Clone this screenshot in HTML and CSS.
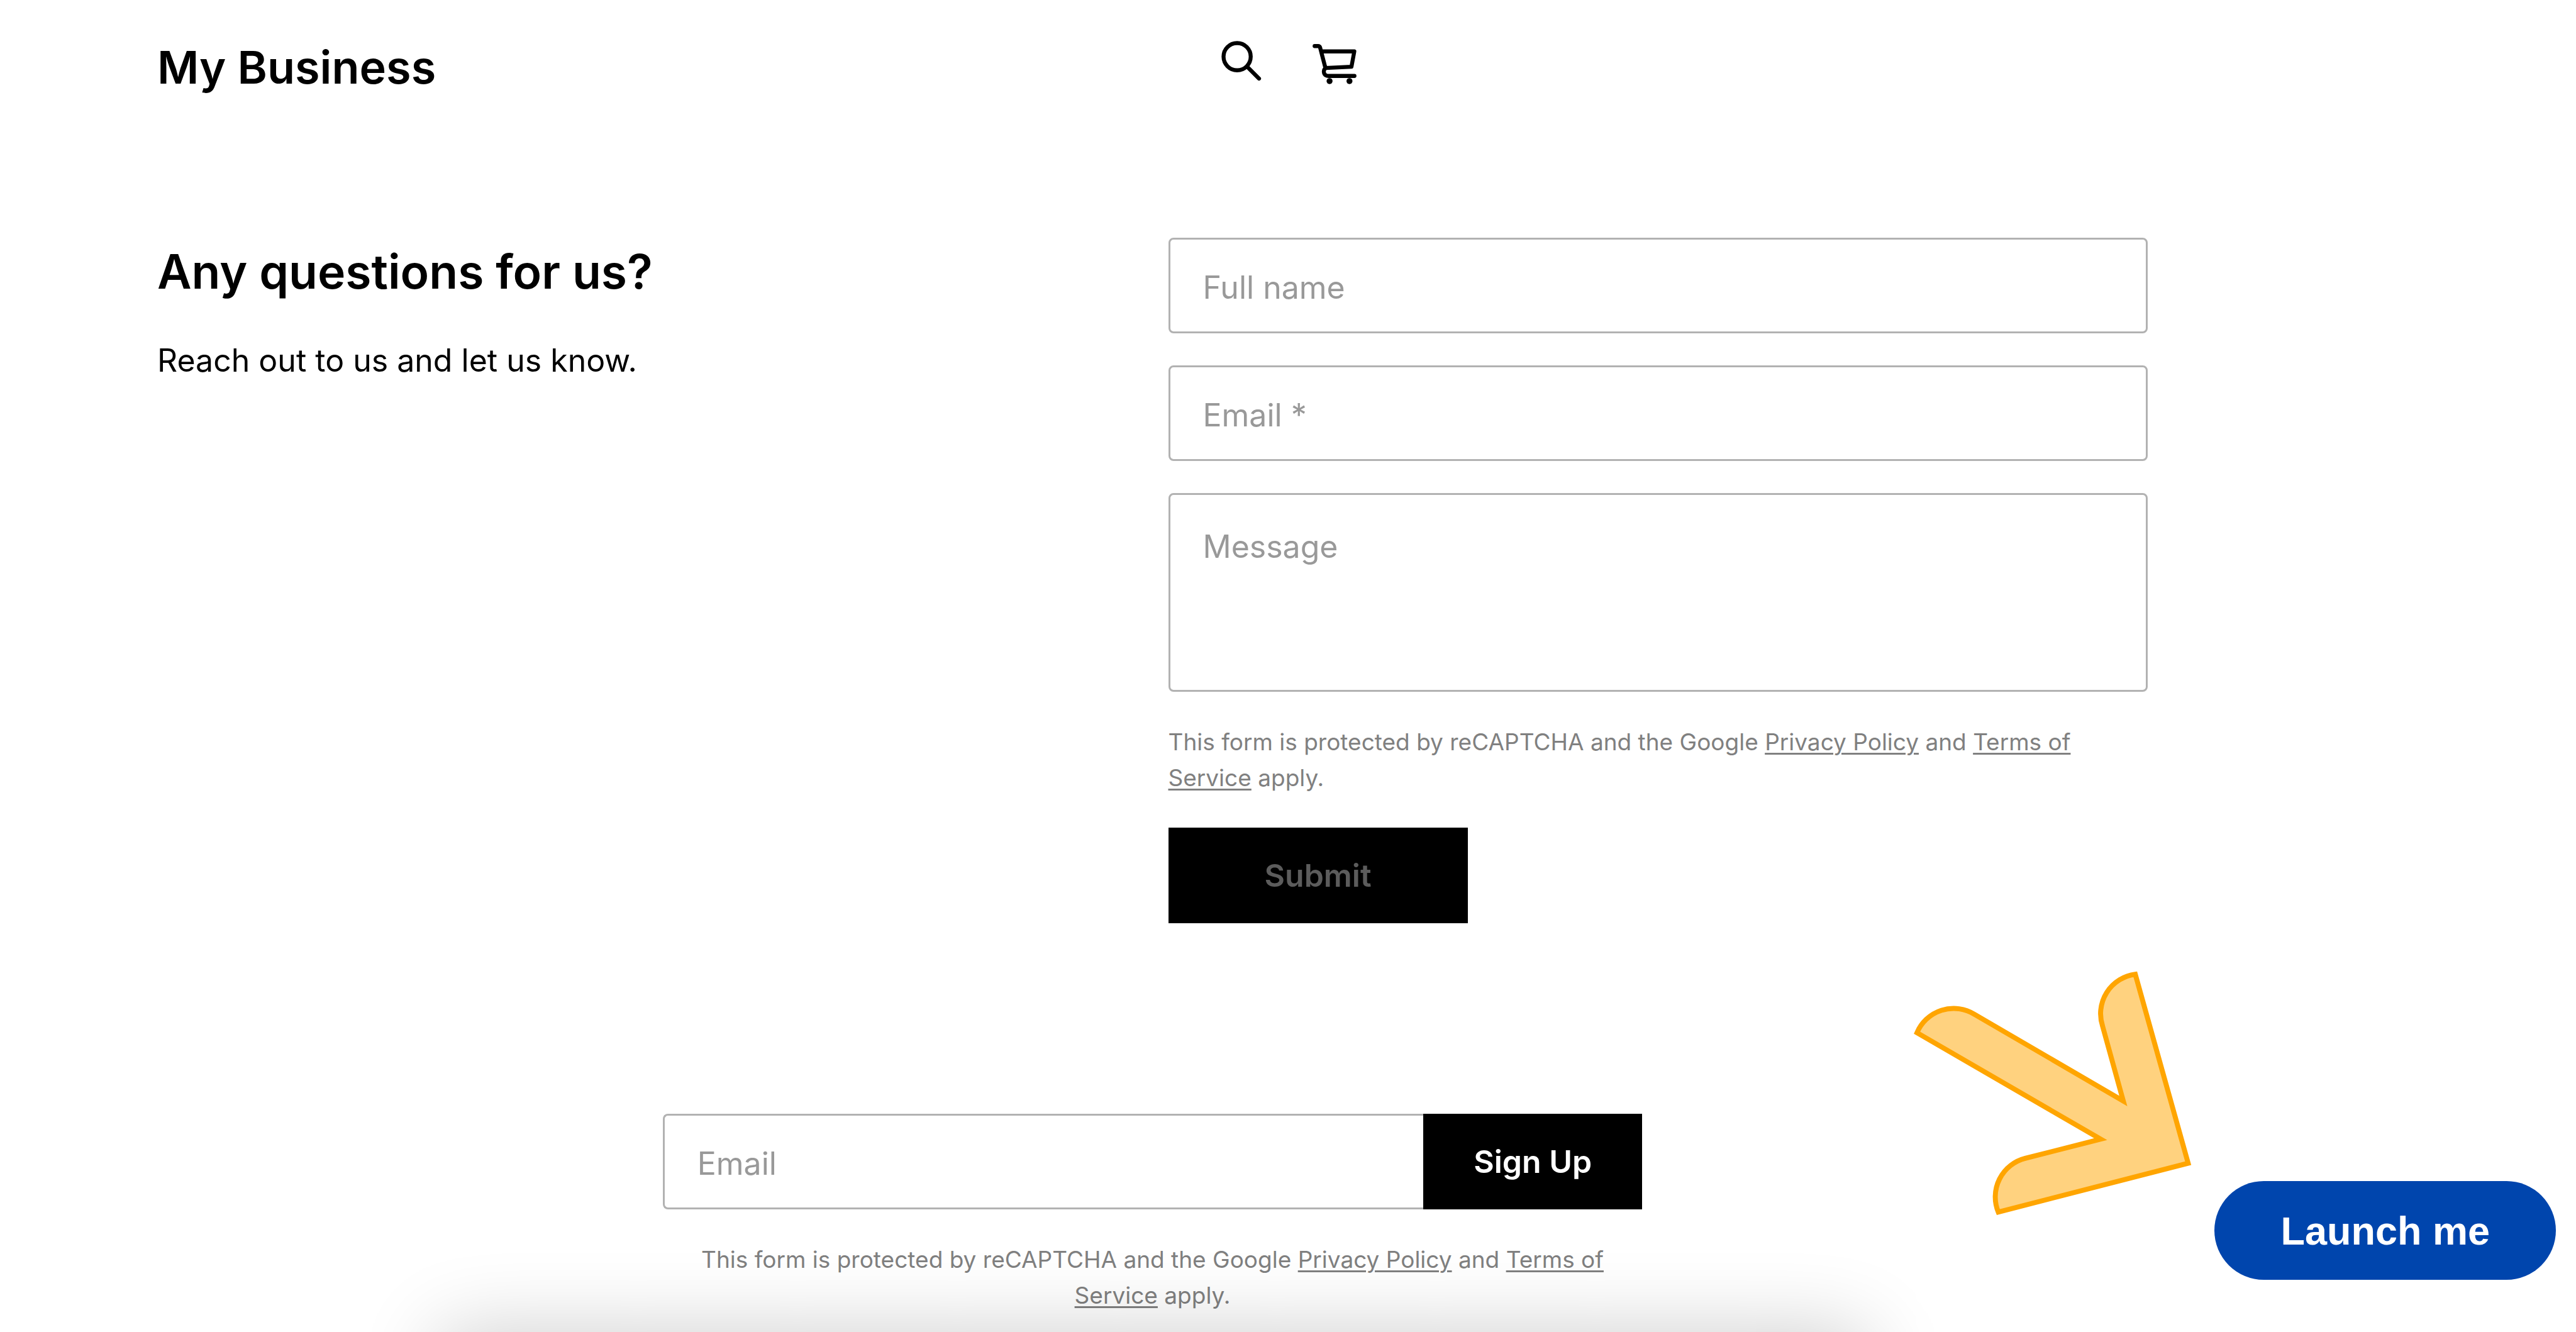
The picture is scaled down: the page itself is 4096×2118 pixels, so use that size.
FILE: index.html
```html
<!DOCTYPE html>
<html lang="en">
<head>
<meta charset="UTF-8">
<meta name="viewport" content="width=device-width, initial-scale=1.0">
<title>My Business</title>
<link rel="stylesheet" href="styles.css">
</head>
<body>
  <header class="header">
    <a href="index.html" class="logo">My Business</a>
    <div class="header-icons">
      <button type="button" class="icon-btn" aria-label="Search">
        <svg viewBox="0 0 96 96" fill="none" stroke="#000" stroke-width="8" stroke-linecap="round">
          <circle cx="39.3" cy="39.3" r="27.3"/>
          <path d="M60 60L83.3 83.3"/>
        </svg>
      </button>
      <button type="button" class="icon-btn" aria-label="Cart">
        <svg viewBox="0 0 96 96" fill="none" stroke="#000" stroke-width="8" stroke-linecap="round" stroke-linejoin="round">
          <path d="M8 18H15Q18 18 19 21L29.7 62L82 59.5L87.7 28.7H22"/>
          <path d="M29.7 62C24 68 26 78 36 78H88"/>
          <circle cx="38" cy="88.3" r="6" fill="#000" stroke="none"/>
          <circle cx="78" cy="88.3" r="6" fill="#000" stroke="none"/>
        </svg>
      </button>
    </div>
  </header>

  <main class="content">
    <section class="contact">
      <div class="contact-text">
        <h2>Any questions for us?</h2>
        <p>Reach out to us and let us know.</p>
      </div>
      <form class="contact-form">
        <input type="text" id="name" name="name" class="field" placeholder="Full name" aria-label="Full name">
        <input type="email" id="email" name="email" class="field" placeholder="Email *" aria-label="Email" required>
        <textarea id="message" name="message" class="field field-message" placeholder="Message" aria-label="Message"></textarea>

        <p class="note">This form is protected by reCAPTCHA and the Google <a href="#">Privacy Policy</a> and <a href="#">Terms of Service</a> apply.</p>

        <button type="submit" class="btn submit-btn" disabled>Submit</button>
      </form>
    </section>

    <form class="signup">
      <div class="signup-row">
        <input type="email" id="signup-email" name="signup-email" class="field signup-field" placeholder="Email" aria-label="Email">
        <button type="submit" class="btn signup-btn">Sign Up</button>
      </div>
      <p class="note">This form is protected by reCAPTCHA and the Google <a href="#">Privacy Policy</a> and <a href="#">Terms of Service</a> apply.</p>
    </form>
  </main>

  
  <div class="bottom-bar"></div>

  <!-- arrow pointing at the launcher -->
  <svg class="arrow" viewBox="0 0 700 560" fill="#ffa500" fill-opacity="0.5" stroke="#ffa500" stroke-width="10">
    <path d="M51.8 155.7A80 80 0 0 1 167.4 118.6L466.5 292.9L425 142.9A80 80 0 0 1 490.6 38.2L596.9 417.9L215.2 516.1A80 80 0 0 1 269.2 408.2L421 369.6Z"/>
  </svg>
  <button type="button" class="launcher">Launch me</button>
</body>
</html>
```

FILE: styles.css
```css
* {
  box-sizing: border-box;
}
body {
  font-family: Inter, "Liberation Sans", sans-serif;
  font-size: 50px;
  color: #000;
  background-color: #fff;
  margin: 0;
}
h2, p {
  margin: 0;
}

/* Header */
.header {
  display: grid;
  grid-template-columns: 1fr auto 1fr;
  align-items: start;
  padding: 59px 250px 0;
}
.logo {
  font-size: 72px;
  line-height: 96px;
  font-weight: 600;
  color: #000;
  text-decoration: none;
}
.header-icons {
  display: flex;
  gap: 72px;
}
.icon-btn {
  width: 76px;
  height: 76px;
  padding: 0;
  border: none;
  background: none;
  cursor: pointer;
}
.icon-btn svg {
  display: block;
  width: 100%;
}

/* Contact form */
.content {
  max-width: 3165px;
  margin: 223px 250px 0;
}
.contact {
  display: grid;
  grid-template-columns: 1fr 1fr;
  gap: 50px;
}
.contact-text h2 {
  font-size: 75px;
  line-height: 108px;
  font-weight: 600;
  margin-bottom: 50px;
}
.contact-text p {
  line-height: 75px;
}
.contact-form {
  display: flex;
  flex-direction: column;
  gap: 51px;
}
.field {
  display: block;
  width: 100%;
  height: 152px;
  padding: 5px 52px 0;
  border: 3px solid #b2b2b2;
  border-radius: 8px;
  background-color: #fff;
  color: #000;
  font-family: inherit;
  font-size: 50px;
}
.field::placeholder {
  color: #999;
  opacity: 1;
}
.field-message {
  height: 316px;
  padding-top: 45px;
  line-height: 75px;
  resize: none;
}
.note {
  font-size: 37px;
  line-height: 57px;
  color: #808080;
}
.note a {
  color: inherit;
  text-decoration-thickness: 3px;
  text-underline-offset: 4px;
}
.btn {
  height: 152px;
  border: none;
  background-color: #000;
  color: #fff;
  font-family: inherit;
  font-size: 50px;
  font-weight: 600;
  cursor: pointer;
}
.submit-btn {
  align-self: flex-start;
  padding: 0 153px;
}
.submit-btn:disabled {
  color: #5c5c5c;
  cursor: default;
}

/* Newsletter sign up */
.signup {
  width: calc(50% - 25px);
  margin: 303px auto 0;
}
.signup-row {
  display: flex;
  margin-bottom: 51px;
}
.signup-field {
  flex: 1;
  width: auto;
  min-width: 0;
  border-right: none;
  border-radius: 8px 0 0 8px;
}
.signup-btn {
  padding: 0 80px;
}
.signup .note {
  text-align: center;
}

.bottom-bar {
  position: fixed;
  top: 100%;
  left: 700px;
  width: 2267px;
  height: 200px;
  background-color: #fff;
  box-shadow: 0 0 130px rgba(0, 0, 0, 0.2);
}
.arrow {
  position: fixed;
  right: 535px;
  bottom: 156px;
  width: 554px;
  height: 443px;
}
.launcher {
  position: fixed;
  right: 32px;
  bottom: 83px;
  height: 157px;
  padding: 0 105px;
  border: none;
  border-radius: 79px;
  background-color: #0045ad;
  color: #fff;
  font-family: "Liberation Sans", Arial, sans-serif;
  font-size: 63px;
  font-weight: bold;
  cursor: pointer;
}
```
